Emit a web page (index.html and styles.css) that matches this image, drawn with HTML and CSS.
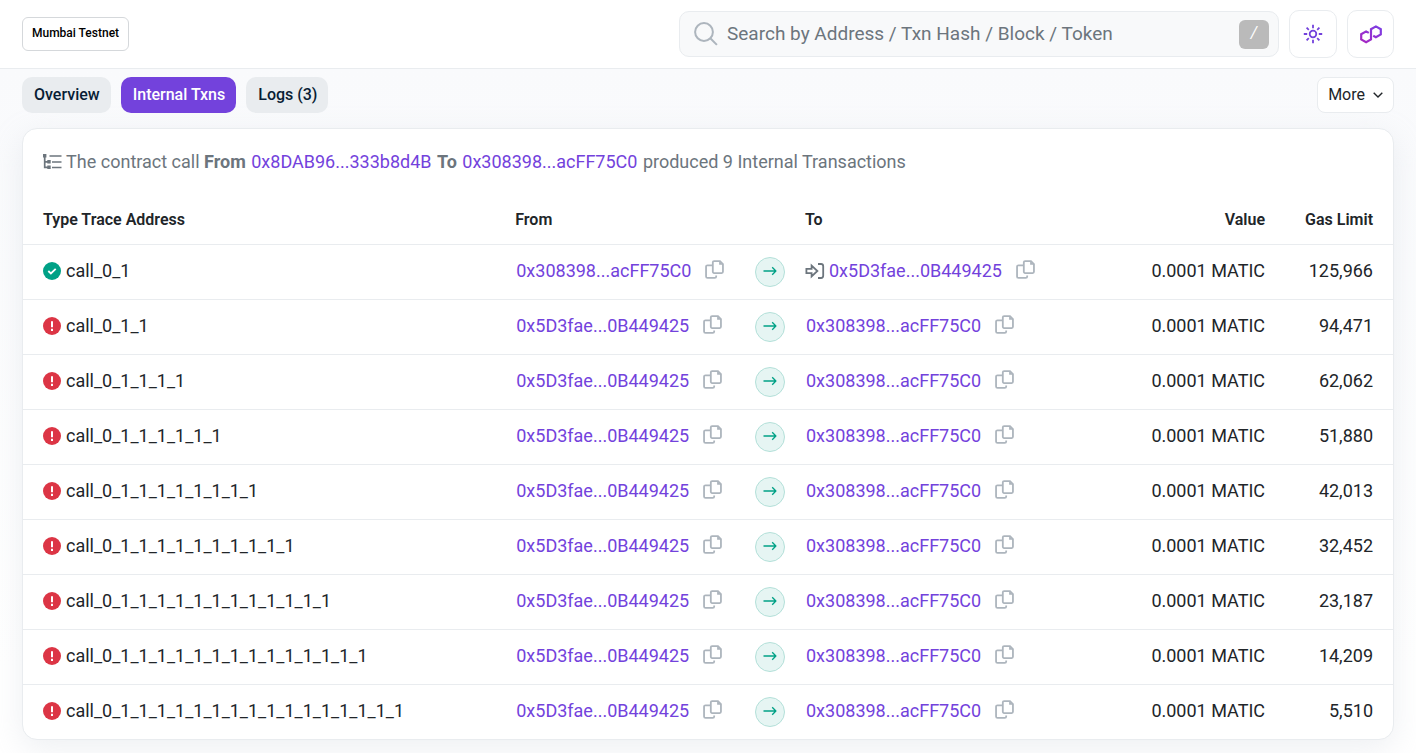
FILE: index.html
```html
<!DOCTYPE html>
<html lang="en">
<head>
<meta charset="utf-8">
<meta name="viewport" content="width=device-width, initial-scale=1">
<title>Internal Transactions</title>
<link rel="stylesheet" href="styles.css">
</head>
<body>
<svg class="sprite" aria-hidden="true">
  <symbol id="copy" viewBox="0 0 18 18">
    <path d="M8.6 1h5.6L17 3.8v7.4a1.2 1.2 0 0 1-1.2 1.2H8.6a1.2 1.2 0 0 1-1.2-1.2v-9A1.2 1.2 0 0 1 8.6 1z M7.2 5H2.4a1.4 1.4 0 0 0-1.4 1.4v9.2A1.4 1.4 0 0 0 2.4 17h6.8a1.4 1.4 0 0 0 1.4-1.4v-1" fill="none" stroke="currentColor" stroke-width="1.7"/>
    <path d="M13.4 1v3.6H17z" fill="currentColor"/>
  </symbol>
  <symbol id="arrow" viewBox="0 0 14 10">
    <path d="M.5 5h12.4M9.2 1.3 12.9 5 9.2 8.7" fill="none" stroke="currentColor" stroke-width="1.3" stroke-linejoin="round"/>
  </symbol>
  <symbol id="ok" viewBox="0 0 18 18">
    <circle cx="9" cy="9" r="9" fill="currentColor"/>
    <path d="m5.3 9 2.6 2.5 4.8-4.7" fill="none" stroke="#fff" stroke-width="1.8"/>
  </symbol>
  <symbol id="fail" viewBox="0 0 18 18">
    <circle cx="9" cy="9" r="9" fill="currentColor"/>
    <path d="M9 4.3v5.9M9 11.8v2.1" fill="none" stroke="#fff" stroke-width="2"/>
  </symbol>
</svg>

<header class="topbar">
  <button class="network" type="button">Mumbai Testnet</button>
  <div class="tools">
    <form class="search" role="search">
      <svg class="search-icon" viewBox="0 0 24 24" aria-hidden="true"><circle cx="10" cy="10" r="8.9"/><path d="m16.3 16.3 6.6 6.6"/></svg>
      <input class="search-input" type="text" aria-label="Search" placeholder="Search by Address / Txn Hash / Block / Token">
      <kbd class="slash">/</kbd>
    </form>
    <button class="square" type="button" aria-label="Toggle theme">
      <svg class="sun" viewBox="0 0 20 20" aria-hidden="true"><circle cx="10" cy="10" r="3.3"/><path d="M10 .8v3.4M10 15.8v3.4M.8 10h3.4M15.8 10h3.4M3.6 3.6l2.2 2.2M14.2 14.2l2.2 2.2M16.4 3.6l-2.2 2.2M5.8 14.2l-2.2 2.2"/></svg>
    </button>
    <button class="square last" type="button" aria-label="Explorers">
      <svg class="polygon" viewBox="0 0 22 19" aria-hidden="true">
        <defs><linearGradient id="pg" x1="0" y1="1" x2="1" y2="0"><stop offset="0" stop-color="#a726c1"/><stop offset="1" stop-color="#7b3fe4"/></linearGradient></defs>
        <path d="M8.8 7.9 6.1 6.4 1.2 9.2v5.2l4.9 2.8 4.9-2.8V4.2l4.9-2.8 4.9 2.8v5.2l-4.9 2.8-2.7-1.5" fill="none" stroke="url(#pg)" stroke-width="2.2"/>
      </svg>
    </button>
  </div>
</header>

<main class="page">
  <nav class="tabs">
    <a class="tab" href="#overview">Overview</a>
    <a class="tab active" href="#internal">Internal Txns</a>
    <a class="tab" href="#logs">Logs (3)</a>
    <button class="more" type="button">More
      <svg viewBox="0 0 10 6" aria-hidden="true"><path d="m.7.7 4.3 4.3L9.3.7"/></svg>
    </button>
  </nav>

  <section class="card">
    <p class="summary">
      <svg class="tree" viewBox="0 0 19 16" aria-hidden="true">
        <path d="M1.7 1v12.3H6M1.7 7.8H6M6.5 2H18.5M9 8H18.5M9 13.5H18.5" fill="none" stroke="currentColor" stroke-width="1.7"/>
        <path d="M0 0h3.4v3.4H0zM4.3 6.1h3.4v3.4H4.3zM4.3 11.6h3.4V15H4.3z" fill="currentColor"/>
      </svg>
      The contract call <b>From</b> <a class="addr" href="#a">0x8DAB96...333b8d4B</a> <b>To</b> <a class="addr" href="#b">0x308398...acFF75C0</a> produced 9 Internal Transactions
    </p>
    <table class="txns">
      <colgroup><col class="c-type"><col class="c-from"><col class="c-arrow"><col><col class="c-value"><col class="c-gas"></colgroup>
      <thead>
        <tr><th>Type Trace Address</th><th>From</th><th></th><th>To</th><th class="num">Value</th><th class="num">Gas Limit</th></tr>
      </thead>
      <tbody>
        <tr>
          <td><span class="cell"><svg class="status ok"><use href="#ok"/></svg>call_0_1</span></td>
          <td><span class="cell"><a class="addr" href="#b">0x308398...acFF75C0</a><button class="copy" type="button" aria-label="Copy"><svg><use href="#copy"/></svg></button></span></td>
          <td><span class="dir"><svg><use href="#arrow"/></svg></span></td>
          <td><span class="cell"><svg class="enter" viewBox="0 0 20 16" aria-hidden="true"><path d="M1.4 5.9h5.2V2.5L12.4 8l-5.8 5.5v-3.4H1.4zM13 1h3a2.2 2.2 0 0 1 2.2 2.2v9.6A2.2 2.2 0 0 1 16 15h-3"/></svg><a class="addr" href="#c">0x5D3fae...0B449425</a><button class="copy" type="button" aria-label="Copy"><svg><use href="#copy"/></svg></button></span></td>
          <td class="num">0.0001 MATIC</td><td class="num">125,966</td>
        </tr>
        <tr>
          <td><span class="cell"><svg class="status fail"><use href="#fail"/></svg>call_0_1_1</span></td>
          <td><span class="cell"><a class="addr" href="#c">0x5D3fae...0B449425</a><button class="copy" type="button" aria-label="Copy"><svg><use href="#copy"/></svg></button></span></td>
          <td><span class="dir"><svg><use href="#arrow"/></svg></span></td>
          <td><span class="cell"><a class="addr" href="#b">0x308398...acFF75C0</a><button class="copy" type="button" aria-label="Copy"><svg><use href="#copy"/></svg></button></span></td>
          <td class="num">0.0001 MATIC</td><td class="num">94,471</td>
        </tr>
        <tr>
          <td><span class="cell"><svg class="status fail"><use href="#fail"/></svg>call_0_1_1_1_1</span></td>
          <td><span class="cell"><a class="addr" href="#c">0x5D3fae...0B449425</a><button class="copy" type="button" aria-label="Copy"><svg><use href="#copy"/></svg></button></span></td>
          <td><span class="dir"><svg><use href="#arrow"/></svg></span></td>
          <td><span class="cell"><a class="addr" href="#b">0x308398...acFF75C0</a><button class="copy" type="button" aria-label="Copy"><svg><use href="#copy"/></svg></button></span></td>
          <td class="num">0.0001 MATIC</td><td class="num">62,062</td>
        </tr>
        <tr>
          <td><span class="cell"><svg class="status fail"><use href="#fail"/></svg>call_0_1_1_1_1_1_1</span></td>
          <td><span class="cell"><a class="addr" href="#c">0x5D3fae...0B449425</a><button class="copy" type="button" aria-label="Copy"><svg><use href="#copy"/></svg></button></span></td>
          <td><span class="dir"><svg><use href="#arrow"/></svg></span></td>
          <td><span class="cell"><a class="addr" href="#b">0x308398...acFF75C0</a><button class="copy" type="button" aria-label="Copy"><svg><use href="#copy"/></svg></button></span></td>
          <td class="num">0.0001 MATIC</td><td class="num">51,880</td>
        </tr>
        <tr>
          <td><span class="cell"><svg class="status fail"><use href="#fail"/></svg>call_0_1_1_1_1_1_1_1_1</span></td>
          <td><span class="cell"><a class="addr" href="#c">0x5D3fae...0B449425</a><button class="copy" type="button" aria-label="Copy"><svg><use href="#copy"/></svg></button></span></td>
          <td><span class="dir"><svg><use href="#arrow"/></svg></span></td>
          <td><span class="cell"><a class="addr" href="#b">0x308398...acFF75C0</a><button class="copy" type="button" aria-label="Copy"><svg><use href="#copy"/></svg></button></span></td>
          <td class="num">0.0001 MATIC</td><td class="num">42,013</td>
        </tr>
        <tr>
          <td><span class="cell"><svg class="status fail"><use href="#fail"/></svg>call_0_1_1_1_1_1_1_1_1_1_1</span></td>
          <td><span class="cell"><a class="addr" href="#c">0x5D3fae...0B449425</a><button class="copy" type="button" aria-label="Copy"><svg><use href="#copy"/></svg></button></span></td>
          <td><span class="dir"><svg><use href="#arrow"/></svg></span></td>
          <td><span class="cell"><a class="addr" href="#b">0x308398...acFF75C0</a><button class="copy" type="button" aria-label="Copy"><svg><use href="#copy"/></svg></button></span></td>
          <td class="num">0.0001 MATIC</td><td class="num">32,452</td>
        </tr>
        <tr>
          <td><span class="cell"><svg class="status fail"><use href="#fail"/></svg>call_0_1_1_1_1_1_1_1_1_1_1_1_1</span></td>
          <td><span class="cell"><a class="addr" href="#c">0x5D3fae...0B449425</a><button class="copy" type="button" aria-label="Copy"><svg><use href="#copy"/></svg></button></span></td>
          <td><span class="dir"><svg><use href="#arrow"/></svg></span></td>
          <td><span class="cell"><a class="addr" href="#b">0x308398...acFF75C0</a><button class="copy" type="button" aria-label="Copy"><svg><use href="#copy"/></svg></button></span></td>
          <td class="num">0.0001 MATIC</td><td class="num">23,187</td>
        </tr>
        <tr>
          <td><span class="cell"><svg class="status fail"><use href="#fail"/></svg>call_0_1_1_1_1_1_1_1_1_1_1_1_1_1_1</span></td>
          <td><span class="cell"><a class="addr" href="#c">0x5D3fae...0B449425</a><button class="copy" type="button" aria-label="Copy"><svg><use href="#copy"/></svg></button></span></td>
          <td><span class="dir"><svg><use href="#arrow"/></svg></span></td>
          <td><span class="cell"><a class="addr" href="#b">0x308398...acFF75C0</a><button class="copy" type="button" aria-label="Copy"><svg><use href="#copy"/></svg></button></span></td>
          <td class="num">0.0001 MATIC</td><td class="num">14,209</td>
        </tr>
        <tr>
          <td><span class="cell"><svg class="status fail"><use href="#fail"/></svg>call_0_1_1_1_1_1_1_1_1_1_1_1_1_1_1_1_1</span></td>
          <td><span class="cell"><a class="addr" href="#c">0x5D3fae...0B449425</a><button class="copy" type="button" aria-label="Copy"><svg><use href="#copy"/></svg></button></span></td>
          <td><span class="dir"><svg><use href="#arrow"/></svg></span></td>
          <td><span class="cell"><a class="addr" href="#b">0x308398...acFF75C0</a><button class="copy" type="button" aria-label="Copy"><svg><use href="#copy"/></svg></button></span></td>
          <td class="num">0.0001 MATIC</td><td class="num">5,510</td>
        </tr>
      </tbody>
    </table>
  </section>
</main>
</body>
</html>
```
FILE: styles.css
```css
* { box-sizing: border-box; }
body {
  margin: 0;
  background: #fff;
  color: #212529;
  font: 18px/26px Roboto, "Liberation Sans", sans-serif;
}
button { font-family: inherit; cursor: pointer; }
a { text-decoration: none; }
.sprite { display: none; }

.topbar {
  display: flex;
  align-items: center;
  justify-content: space-between;
  padding: 10px 22px;
  border-bottom: 1px solid #e9ecef;
  background: #fff;
}
.network {
  height: 34px;
  padding: 0 9px 2px;
  border: 1px solid #d5d8db;
  border-radius: 6px;
  background: #fff;
  color: #000;
  font-size: 12px;
  font-weight: 500;
}
.tools { display: flex; align-items: center; gap: 10px; }
.search {
  display: flex;
  align-items: center;
  width: 600px;
  height: 46px;
  padding: 0 9px 0 14px;
  border: 1px solid #e9ecef;
  border-radius: 10px;
  background: #f8f9fa;
}
.search-icon {
  width: 24px;
  height: 24px;
  fill: none;
  stroke: #adb5bd;
  stroke-width: 2;
}
.search-input {
  flex: 1;
  min-width: 0;
  padding: 0 9px;
  border: 0;
  outline: 0;
  background: transparent;
  color: #212529;
  font: inherit;
  font-size: 19px;
}
.search-input::placeholder { color: #6c757d; opacity: 1; }
.slash {
  width: 30px;
  height: 29px;
  border-radius: 6px;
  background: #bababa;
  color: #fff;
  font: italic 16px/25px Roboto, sans-serif;
  text-align: center;
}
.square {
  display: grid;
  place-items: center;
  width: 48px;
  height: 48px;
  padding: 0;
  border: 1px solid #e9ecef;
  border-radius: 10px;
  background: #fff;
}
.square.last { width: 47px; }
.sun { width: 20px; height: 20px; fill: none; stroke: #7342dc; stroke-width: 1.8; }
.polygon { width: 22px; height: 19px; }

.page {
  padding: 8px 22px 13px;
  background: linear-gradient(#f9fafc, #fff 600px);
}
.tabs { display: flex; gap: 10px; margin-bottom: 15px; }
.tab {
  padding: 5px 11px 5px 12px;
  border-radius: 10px;
  background: #e9ecef;
  color: #081d35;
  font-size: 16px;
  font-weight: 500;
}
.tab.active { background: #7342dc; color: #fff; }
.more {
  display: flex;
  align-items: center;
  gap: 8px;
  height: 36px;
  margin-left: auto;
  padding: 0 10px 1px;
  border: 1px solid #e9ecef;
  border-radius: 8px;
  background: #fff;
  color: #212529;
  font-size: 16px;
}
.more svg { width: 10px; height: 6px; fill: none; stroke: #212529; stroke-width: 1.4; }

.card {
  border: 1px solid #e9ecef;
  border-radius: 15px;
  background: #fff;
  box-shadow: 0 9px 30px rgba(189, 197, 209, .25);
}
.summary { margin: 0; padding: 20px 20px 19px; color: #6c757d; }
.summary b { font-weight: 700; }
.tree { width: 19px; height: 16px; vertical-align: -2px; }
.addr { padding: 0 1px; color: #7342dc; }
.cell .addr { padding: 0 2px 0 1px; }

.txns { width: 100%; border-collapse: collapse; table-layout: fixed; }
.c-type { width: 35.2%; }
.c-from { width: 17.5%; }
.c-arrow { width: 50px; }
.c-value { width: 170px; }
.c-gas { width: 118px; }
th { height: 50px; padding: 2px 10px 0; font-size: 16px; font-weight: 600; text-align: left; }
td { height: 55px; padding: 0 10px 2px; border-top: 1px solid #e9ecef; white-space: nowrap; }
th:first-child, td:first-child { padding-left: 20px; }
th:last-child, td:last-child { padding-right: 20px; }
th.num, td.num { text-align: right; }
.cell { display: flex; align-items: center; }
.status { width: 18px; height: 18px; margin-right: 5px; }
.ok { color: #00a186; }
.fail { color: #dc3545; }
.copy {
  display: flex;
  margin-left: 12px;
  padding: 0 0 2px;
  border: 0;
  background: none;
  color: #adb5bd;
}
.copy svg { width: 19px; height: 19px; }
.enter { width: 20px; height: 16px; margin-right: 3px; fill: none; stroke: #6c757d; stroke-width: 1.8; }
.dir {
  display: grid;
  place-items: center;
  width: 30px;
  height: 30px;
  margin-top: 2px;
  padding-bottom: 2px;
  border: 1px solid #b3e0d9;
  border-radius: 50%;
  background: #e6f5f3;
  color: #00a186;
}
.dir svg { width: 14px; height: 10px; }
```
